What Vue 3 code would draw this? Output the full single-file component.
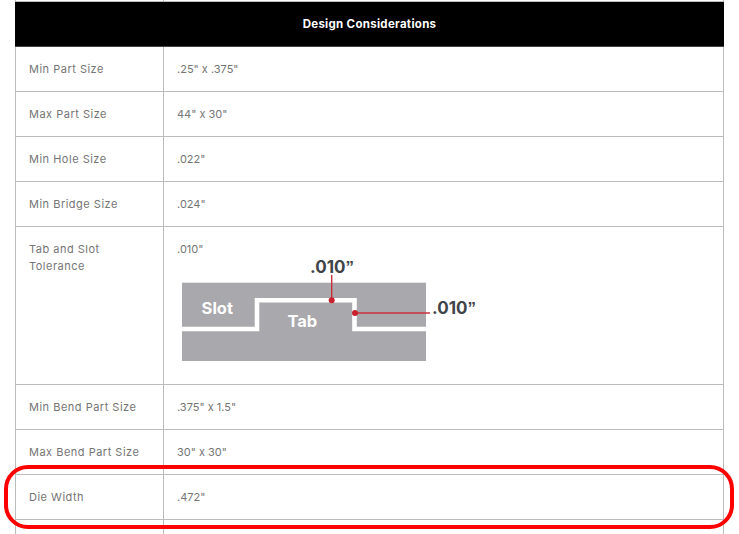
<script setup>
const before = [
  ['Min Part Size', '.25" x .375"'],
  ['Max Part Size', '44" x 30"'],
  ['Min Hole Size', '.022"'],
  ['Min Bridge Size', '.024"'],
]
const after = [
  ['Min Bend Part Size', '.375" x 1.5"'],
  ['Max Bend Part Size', '30" x 30"'],
  ['Die Width', '.472"'],
]
</script>

<template>
  <div class="page">
    <table class="spec">
      <colgroup>
        <col class="c1" />
        <col />
      </colgroup>
      <tbody>
        <tr class="stub"><td></td><td></td></tr>
        <tr class="head"><th colspan="2">Design Considerations</th></tr>
        <tr v-for="r in before" :key="r[0]" class="row">
          <td class="name">{{ r[0] }}</td>
          <td class="val">{{ r[1] }}</td>
        </tr>
        <tr class="tall">
          <td class="name">Tab and Slot<br />Tolerance</td>
          <td class="val">
            .010"
            <svg class="diagram" width="320" height="112" viewBox="0 -6 320 112">
              <rect x="5" y="24.700" width="244" height="78.300" fill="#a9a8ac" />
              <path d="M5 71H80V42.300H177.500V71H249" fill="none" stroke="#fff" stroke-width="4.600" />
              <path d="M154.700 17V42.300M178 55H253" fill="none" stroke="#c9303c" stroke-width="1.400" />
              <circle cx="154.700" cy="42.300" r="3" fill="#c8202f" />
              <circle cx="178" cy="55" r="3" fill="#c8202f" />
              <text x="40.300" y="55.700" class="lbl" text-anchor="middle">Slot</text>
              <text x="125.300" y="69.300" class="lbl" text-anchor="middle">Tab</text>
              <text x="133" y="14.500" class="dim">.010<tspan class="q">”</tspan></text>
              <text x="255" y="56" class="dim">.010<tspan class="q">”</tspan></text>
            </svg>
          </td>
        </tr>
        <tr v-for="r in after" :key="r[0]" class="row">
          <td class="name">{{ r[0] }}</td>
          <td class="val">{{ r[1] }}</td>
        </tr>
        <tr class="row"><td></td><td></td></tr>
      </tbody>
    </table>
    <div class="mark"></div>
  </div>
</template>

<style scoped>
.page {
  position: relative;
  width: 739px;
  height: 534px;
  overflow: hidden;
  background: #fff;
  font-family: Inter, "Open Sans", sans-serif;
}
.spec {
  margin-left: 15px;
  width: 709px;
  table-layout: fixed;
  border-collapse: collapse;
  font-size: 11px;
  color: #757575;
}
.c1 { width: 148px; }
td, th {
  border: 1px solid #bcbcbc;
  padding: 0 13px;
  text-align: left;
  font-weight: 400;
}
.name { letter-spacing: 0.5px; }
.val { letter-spacing: 0; }
.stub td {
  height: 1px;
  padding: 0;
  border-top: none;
}
.head th {
  height: 44px;
  background: #000;
  color: #fff;
  font-weight: 700;
  font-size: 11.500px;
  text-align: center;
  letter-spacing: 0.3px;
  border-color: #bcbcbc #000 #444;
}
.row td { height: 44px; }
.tall td {
  height: 143px;
  vertical-align: top;
  padding-top: 14px;
  line-height: 17px;
}
.diagram {
  display: block;
  margin-top: -6px;
}
.lbl {
  font-size: 16.500px;
  font-weight: 700;
  fill: #fff;
  letter-spacing: 0;
}
.dim {
  font-size: 17px;
  font-weight: 700;
  fill: #3f444a;
  letter-spacing: 0;
}
.q { font-family: "Liberation Sans", sans-serif; }
.mark {
  position: absolute;
  left: 4px;
  top: 465px;
  width: 730px;
  height: 64px;
  box-sizing: border-box;
  border: 4px solid #f00;
  border-radius: 24px;
}
</style>
